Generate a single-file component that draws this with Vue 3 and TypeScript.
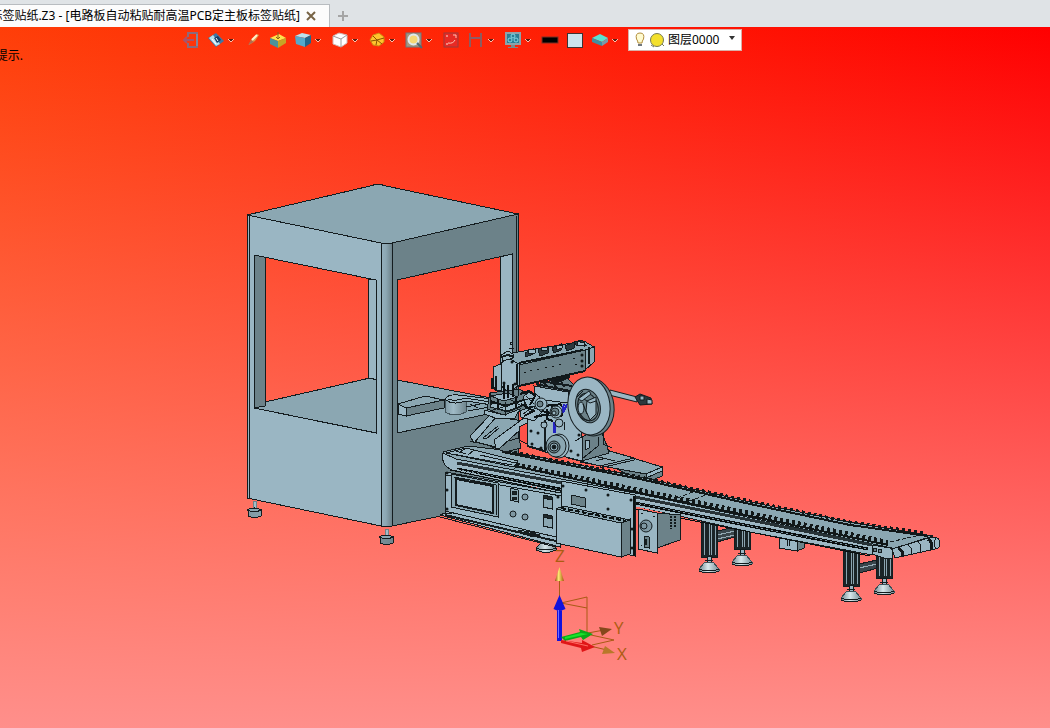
<script setup lang="ts">
import { ref } from 'vue'

interface Tool {
  id: string
  label: string
  menu?: boolean
}

interface Foot {
  x: number
  y: number
}

interface Leg {
  x: number
  top: number
  bottom: number
}

const documentTitle = '标签贴纸.Z3 - [电路板自动粘贴耐高温PCB定主板标签贴纸]'
const layers: string[] = ['图层0000']
const activeLayer = ref<string>('图层0000')

const tools: Tool[] = [
  { id: 'exit', label: '退出' },
  { id: 'plane', label: '基准面', menu: true },
  { id: 'brush', label: '格式刷' },
  { id: 'box', label: '实体' },
  { id: 'shaded', label: '着色', menu: true },
  { id: 'wire', label: '线框', menu: true },
  { id: 'section', label: '剖面', menu: true },
  { id: 'zoom', label: '缩放', menu: true },
  { id: 'fit', label: '适合窗口' },
  { id: 'measure', label: '测量', menu: true },
  { id: 'display', label: '显示', menu: true },
  { id: 'line', label: '线色' },
  { id: 'fill', label: '填充色' },
  { id: 'layer', label: '图层', menu: true },
]

const conveyorFeet: Foot[] = [
  { x: 709, y: 569 },
  { x: 742, y: 562 },
  { x: 851, y: 598 },
  { x: 884, y: 591 },
]

const legs: Leg[] = [
  { x: 734, top: 526, bottom: 549 },
  { x: 701, top: 520, bottom: 557 },
  { x: 876, top: 556, bottom: 578 },
  { x: 843, top: 548, bottom: 586 },
]

const bolts: number[][] = [
  [447, 473], [447, 490], [447, 509], [563, 486], [586, 490], [608, 495],
  [608, 509], [631, 500], [632, 529], [632, 548], [558, 497], [531, 431],
  [538, 433], [532, 444], [541, 448], [571, 451], [578, 455], [579, 435],
  [582, 355], [582, 361], [582, 366], [512, 362], [504, 383], [515, 384],
]

const armHoles: number[][] = [
  [524, 372], [530, 370], [537, 369], [545, 367], [552, 366], [559, 364], [573, 358], [575, 364],
]

const panelButtons: number[][] = [[525, 497], [513, 514], [525, 517]]
</script>

<template>
  <div class="app">
    <header class="tabs">
      <div class="tab">
        <span class="tab-title">{{ documentTitle }}</span>
        <button class="tab-close" type="button" aria-label="关闭">
          <svg viewBox="0 0 12 12" width="12" height="12"><path d="M2 2L10 10M10 2L2 10" stroke="#776345" stroke-width="2" /></svg>
        </button>
      </div>
      <button class="tab-new" type="button" aria-label="新建">
        <svg viewBox="0 0 12 12" width="12" height="12"><path d="M6 1V11M1 6H11" stroke="#a5a5a5" stroke-width="2" /></svg>
      </button>
    </header>

    <main class="stage">
      <svg class="scene" viewBox="0 27 1050 701" role="img" aria-label="贴标机三维模型">
        <defs>
          <linearGradient id="post" x1="0" x2="1" y1="0" y2="0">
            <stop offset="0" stop-color="#95b0bd" />
            <stop offset="0.45" stop-color="#8ca7b3" />
            <stop offset="1" stop-color="#6c8189" />
          </linearGradient>
          <linearGradient id="cone" x1="0" x2="1" y1="0" y2="0">
            <stop offset="0" stop-color="#6f868e" />
            <stop offset="0.45" stop-color="#d8e8ec" />
            <stop offset="1" stop-color="#758c94" />
          </linearGradient>
          <linearGradient id="drum" x1="0" x2="1" y1="0" y2="0">
            <stop offset="0" stop-color="#7f99a4" />
            <stop offset="0.4" stop-color="#a0bbc7" />
            <stop offset="1" stop-color="#71878f" />
          </linearGradient>
          <linearGradient id="gold" x1="0" x2="1" y1="0" y2="0">
            <stop offset="0" stop-color="#8a4a0c" />
            <stop offset="0.4" stop-color="#ffe873" />
            <stop offset="1" stop-color="#a3560c" />
          </linearGradient>
        </defs>

        <!-- cabinet -->
        <g class="ink">
          <path class="front" d="M500 257L512 254V400H500Z" />
          <path class="front" d="M368 279L376 280V381L368 379Z" />
          <path class="top" d="M254 408L265 402L370 378L377 380V433Z" />
          <path class="top" d="M397 380L470 394L512 402V410L397 434Z" />
          <path class="side" d="M254 255L265 257V406L254 408Z" />
          <path class="top" d="M247 215L370 186Q378 183 386 186L518 214L392 243Q386 245 381 243Z" />
          <path class="front" fill-rule="evenodd" d="M247 215L381 243V526L247 498V216ZM254 255V408L376 433V280Z" />
          <path class="side" fill-rule="evenodd" d="M392 243L518 214V500L392 526ZM397 280V433L512 409V254Z" />
          <path fill="url(#post)" d="M381 243Q386 245 392 243V526Q386 528 381 526Z" />
          <path class="line" d="M249 216V498M516 216V400" />
          <path class="top" d="M398 404L425 396L444 400L406 408Z" />
          <path class="front" d="M398 404L406 408V416L398 414Z" />
          <path class="side" d="M406 408L444 400V408L406 416Z" />
          <path fill="#a3bcc7" stroke="#6c8289" d="M253 501H256V510H253ZM385 529H388V537H385Z" />
          <path fill="url(#drum)" d="M248 510V516Q254 519 261 516V510ZM380 537V543Q386 546 393 543V537Z" />
          <path class="top" d="M247 510Q254 506 262 510Q254 513 247 510ZM379 537Q386 533 394 537Q386 540 379 537Z" />
        </g>

        <!-- arm inside the cabinet -->
        <g class="ink">
          <path fill="url(#drum)" stroke="#42545b" d="M445 399V412Q455 418 466 412V399Z" />
          <path class="front" d="M445 399Q448 394 458 395L492 399V405L466 401Q452 406 445 399Z" />
          <path class="line" d="M448 399Q456 402 465 398L490 402M466 407L485 403M468 411L490 407M470 404L478 408" />
        </g>

        <!-- support legs -->
        <g class="ink">
          <path fill="#39464c" d="M717 531L745 525V534L717 542ZM859 564L886 558V566L859 573Z" />
          <path stroke="#93aab4" d="M717 535L735 531M717 539L735 535M859 568L877 564" />
          <g v-for="leg in legs" :key="leg.x">
            <rect fill="#1b2427" :x="leg.x" :y="leg.top" width="16" :height="leg.bottom - leg.top" />
            <path stroke="#8ba4b0" :d="`M${leg.x + 3} ${leg.top}V${leg.bottom - 2}M${leg.x + 8} ${leg.top}V${leg.bottom - 2}M${leg.x + 10} ${leg.top}V${leg.bottom - 2}M${leg.x + 14} ${leg.top}V${leg.bottom - 2}`" />
          </g>
          <g v-for="foot in conveyorFeet" :key="foot.x">
            <path class="front" :d="`M${foot.x - 2} ${foot.y - 13}H${foot.x + 2}V${foot.y - 6}H${foot.x - 2}Z`" />
            <path fill="url(#cone)" stroke="#3f5056" :d="`M${foot.x - 4} ${foot.y - 7}H${foot.x + 4}L${foot.x + 10} ${foot.y}V${foot.y + 2}Q${foot.x} ${foot.y + 6} ${foot.x - 10} ${foot.y + 2}V${foot.y}Z`" />
            <path class="line" :d="`M${foot.x - 10} ${foot.y}Q${foot.x} ${foot.y + 4} ${foot.x + 10} ${foot.y}M${foot.x - 10} ${foot.y + 2}Q${foot.x} ${foot.y + 6} ${foot.x + 10} ${foot.y + 2}M${foot.x - 4} ${foot.y - 9}H${foot.x + 4}`" />
          </g>
          <path fill="url(#cone)" d="M541 543H551L556 548V550Q546 555 536 550V548Z" />
          <path class="line" d="M536 548Q546 552 556 548" />
          <path class="front" d="M779 537L797 541V551L779 548Z" />
          <path class="side" d="M797 541L804 538V548L797 551Z" />
          <path class="line" d="M787 540V546M789 540V546" />
        </g>

        <!-- base plates behind the belt -->
        <g class="ink">
          <path class="side" d="M600 461L662 471V476L646 483Z" />
          <path class="top" d="M580 462L610 451L662 467L646 474Z" />
          <path class="front" d="M646 474L662 467V471L646 478Z" />
          <path class="top" d="M568 458L606 450L634 458L600 466Z" />
          <path class="line" d="M600 466V468L634 460V458M590 455L615 461M596 461L606 458" />
        </g>

        <!-- conveyor -->
        <g class="ink">
          <path class="top" d="M443 452L468 446L502 450L640 477L750 502L850 522L933 536L892 549L770 524L640 496L455 463Z" />
          <path class="front" d="M443 453Q441 465 450 469L640 507L750 532L872 555L892 548L640 494L456 459Z" />
          <path stroke="#273236" stroke-width="3" d="M457 463L640 498L750 520L872 545" />
          <path stroke="#a3bac5" d="M457 465L640 500L750 522L872 547" />
          <path stroke="#0a0f10" stroke-width="3" d="M457 469L560 489L640 504L750 526L868 549" />
          <path stroke="#7f98a3" stroke-dasharray="2 3" d="M457 469L560 489L640 504L750 526L868 549" />
          <path stroke="#a3bac5" d="M452 469L560 492L640 507L750 529L870 552" />
          <path stroke="#0a0f10" d="M450 470L560 493L640 510L750 532L870 556" />
          <path stroke="#111718" stroke-width="2" d="M510 465L640 493L750 516L888 545" />
          <path stroke="#111718" stroke-width="4" stroke-dasharray="3 3" d="M510 463L640 490L750 513L888 542" />
          <path stroke="#111718" stroke-width="2" d="M502 452L640 479L750 504L850 525L928 536" />
          <path stroke="#111718" stroke-width="3" stroke-dasharray="3 3" d="M502 450L640 477L750 501L850 522L925 533" />
          <path class="line" stroke-dasharray="4 2" d="M672 500L693 492M684 503L706 495M890 542L920 535" />
          <path class="front" d="M446 453L466 448L518 461L514 467L490 462Z" />
          <path class="line" d="M452 454L512 465M466 448L460 452M474 450L468 455M480 455L520 464L514 469M456 451L466 454" />
          <path class="front" d="M872 545L890 548Q895 552 892 558L887 559L872 554Z" />
          <circle class="side" cx="875" cy="550" r="2" />
          <circle class="side" cx="880" cy="551" r="2" />
          <path class="front" d="M892 549L932 537Q940 537 940 543Q940 549 935 549L895 558Z" />
          <path stroke="#101719" stroke-width="3" d="M898 548Q904 551 902 556M928 539Q934 543 931 549" />
          <path class="line" d="M908 545Q914 549 911 555M918 542Q923 546 920 552M936 538Q932 544 936 549" />
        </g>

        <!-- control panel -->
        <g class="ink">
          <path class="front" d="M440 515L446 513L560 541V547Z" />
          <path class="front" d="M445 472L561 493V542L445 515Z" />
          <path class="line" d="M440 517L556 547M445 511L556 537M445 475L561 496M518 530L536 533L534 537L520 533M442 513H452" />
          <path stroke="#151d20" stroke-width="2" d="M518 532L540 535M445 515L556 541" />
          <path class="top" d="M451 474L498 483V517L451 507Z" />
          <path class="line" d="M454 477L496 485V515" />
          <path class="front" stroke-width="2" d="M456 479L493 486V513L456 505Z" />
          <path class="line" d="M478 510L494 514" />
          <path class="top" d="M510 488L518 490V502L510 500Z" />
          <path fill="#1c2528" d="M512 491H516V494H512ZM512 497H516V499H512Z" />
          <path class="top" d="M543 495L552 497V509L543 507ZM543 514L552 516V528L543 526Z" />
          <path fill="#20292c" d="M543 495L552 497V500L543 498ZM543 514L552 516V519L543 517Z" />
        </g>
        <g class="knobs">
          <circle v-for="(b, i) in panelButtons" :key="i" :cx="b[0]" :cy="b[1]" r="3" />
        </g>

        <!-- side panel and drive box -->
        <g class="ink">
          <path class="side" d="M657 513L681 515L680 540L657 548Z" />
          <path stroke="#12191b" stroke-width="2" stroke-dasharray="2 1" d="M671 516V529M675 516V528" />
          <path class="front" d="M638 509L657 513V553L638 549Z" />
          <path class="side" d="M644 536L649 537V548L644 547Z" />
          <path class="line" stroke-width="2" d="M646 539V545" />
          <path class="line" d="M641 513H643M653 516H655M641 545H642" />
          <path class="front" d="M561 481L635 495V556L561 541Z" />
          <path stroke="#0c1213" stroke-width="2" d="M634 496V556" />
          <path class="side" d="M571 495L585 498V507L571 504Z" />
          <path class="side" d="M621 523L630 519V554L621 557Z" />
          <path class="front" d="M556 509L621 523V557L556 543Z" />
          <path class="top" d="M556 509L563 506L630 520L621 523Z" />
          <path stroke="#0c1213" stroke-width="2" stroke-dasharray="5 2" d="M561 508L626 521" />
        </g>
        <g class="knobs">
          <circle cx="646" cy="526" r="6" /><circle cx="644" cy="526" r="3" />
        </g>

        <!-- chute -->
        <g class="ink">
          <path class="side" d="M490 446L519 438L521 448L505 452Z" />
          <path class="top" d="M473 441L496 417L524 421L499 448Z" />
          <path class="front" d="M470 436L490 415L496 417L474 443Z" />
          <path class="front" d="M494 440L524 418L531 420L500 448H496Z" />
          <path class="line" d="M483 438L498 426M486 439L499 428M483 438L486 439M470 441L496 447" />
          <path class="hole" d="M519 427L527 423V444L519 440Z" />
        </g>

        <!-- labelling head -->
        <g class="ink">
          <path class="side" d="M582 437L600 428L607 446L609 453L582 461Z" />
          <path class="front" d="M527 408L538 384L574 385L582 437V461L545 452L527 446Z" />
          <path class="side" d="M540 383L566 377L575 386L570 396L540 390Z" />
          <path class="front" d="M534 386L568 392V403L536 399Z" />
          <path class="line" stroke-width="2" d="M536 384L570 391M540 381L572 386M545 452V420M527 446L545 451M544 383L548 387M552 381L556 387M560 379L564 387" />
          <path fill="#11191b" d="M552 380L569 375V378L556 383Z" />
          <path class="front" d="M585 440H589V448L585 450Z" />
          <path class="line" d="M598 437V446L582 459M603 425V444L612 448M575 441L582 437" />

          <!-- gantry beam -->
          <path class="top" d="M505 360L512 353L584 341L594 347L585 353L519 366Z" />
          <path class="side" d="M519 365L585 350V371L519 386Z" />
          <path class="top" d="M585 350L594 347V362L585 370Z" />
          <path fill="#2c393e" d="M525 353L533 349V354L526 357ZM538 349L548 347V353L540 356ZM552 348L561 344V350L554 353ZM565 346L574 342V348L567 351ZM574 342L582 340L586 345H576Z" />
          <path class="front" d="M528 350L535 349V353L528 354ZM541 348L547 347V350L541 351ZM556 346L562 345V348L556 350ZM577 341L584 343V346L577 345Z" />
          <path stroke="#10181a" stroke-width="2" d="M519 363L583 350M589 347V364M519 386L585 371" />
          <path class="front" d="M493 367L501 364V390H495L493 384Z" />
          <path class="front" d="M501 363L508 358L519 364V385L509 392L501 386Z" />
          <path class="front" d="M501 355L508 351L513 354V358L503 361Z" />
          <path class="line" stroke-width="2" d="M501 357L508 355L514 357" />
          <path stroke="#10181a" stroke-width="3" d="M492 378V389" />
          <path stroke="#10181a" stroke-width="2" d="M496 376V391M517 364V385" />
          <path class="line" d="M510 342H512V344H510ZM509 348H514" />

          <!-- gripper -->
          <path class="side" d="M490 393L520 389L530 397L527 409L506 416L487 409Z" />
          <path class="front" d="M491 396L507 393L518 397L503 401ZM492 403L506 405L524 400V405L507 411L490 407ZM484 410L504 415L520 409L515 418L498 419L484 414Z" />
          <path stroke="#0d1315" stroke-width="2" d="M504 383V399M508 385V398M513 384V397M490 401L506 406L526 399M498 399V409M516 397V408" />
          <path class="line" d="M518 386V396M490 407L508 412L527 404M490 393V405M505 402V416M493 410L510 405M511 400L522 406" />
          <path class="front" d="M523 397L530 391L540 397L538 405L528 409ZM520 411L532 406L542 412L534 421L521 417Z" />
          <path stroke="#0d1315" stroke-width="2" d="M520 394L529 391L535 396L530 405M521 404L534 411L524 416M538 407L552 405L551 413L542 411M534 417L549 414" />
          <path class="line" d="M526 396L534 404M538 396L543 402L537 408M544 415L554 416M529 412L536 408M524 400L532 398M523 414L530 409" />
          <path stroke="#0d1315" stroke-width="2" d="M551 406L560 404L564 409L561 417M547 409V419L553 421" />
          <path class="line" d="M541 422H547M564 422V430" />
          <path stroke="#2424c4" stroke-width="2" d="M567 404L563 413M564 404L562 412" />
          <path stroke="#2424c4" stroke-width="3" d="M554 422V433" />
        </g>
        <g class="round">
          <circle class="front" cx="541" cy="404" r="6" /><circle class="side" cx="540" cy="404" r="3" />
          <circle class="front" cx="556" cy="412" r="6" /><circle class="side" cx="555" cy="412" r="4" /><circle class="front" cx="554" cy="413" r="2" />
          <circle class="front" cx="544" cy="425" r="3" /><circle class="front" cx="559" cy="423" r="4" />
        </g>

        <!-- tape reels -->
        <g class="round">
          <ellipse class="front" cx="559" cy="446" rx="10" ry="12" />
          <ellipse class="top" cx="556" cy="446" rx="10" ry="11" />
          <circle class="side" cx="554" cy="447" r="6" /><circle class="front" cx="554" cy="447" r="4" /><circle fill="#10181a" cx="554" cy="447" r="2" />
          <path class="front" d="M610 390L637 397V402L609 395Z" />
          <path fill="#2c383c" d="M635 397L640 394L651 398L652 404L640 405Z" />
          <path class="front" d="M640 396H644V400H640ZM647 399L652 400V404H647Z" />
          <ellipse class="side" cx="592" cy="407" rx="22" ry="29" transform="rotate(-7 592 407)" />
          <ellipse class="front" cx="589" cy="406" rx="21" ry="29" transform="rotate(-7 589 406)" />
          <ellipse class="side" cx="588" cy="406" rx="12" ry="17" transform="rotate(-15 588 406)" />
          <ellipse fill="none" cx="588" cy="407" rx="10" ry="14" transform="rotate(-15 588 407)" />
          <path class="front" d="M587 401L596 397V414L590 420L586 411ZM578 399L589 391L591 394L582 401Z" />
          <ellipse class="front" cx="581" cy="408" rx="3" ry="6" />
          <path fill="none" d="M577 397L583 391M578 413L583 419L590 421M584 399L590 403L596 401M583 404L587 414" />
        </g>

        <g fill="#111819">
          <circle v-for="(b, i) in bolts" :key="i" :cx="b[0]" :cy="b[1]" r="1.500" />
          <rect v-for="(h, i) in armHoles" :key="i" :x="h[0]" :y="h[1]" width="2" height="1" />
        </g>

        <!-- axis triad -->
        <g fill="none" stroke="#a95a14">
          <path d="M561 603L587 597V634M561 603L587 608M591 635L614 640L592 645M588 633L604 630M590 646L607 650" />
          <path d="M559.500 581V597" />
        </g>
        <path fill="url(#gold)" d="M559.500 567L564 581H555Z" />
        <path fill="#85481b" d="M612 629L602 636L599 627Z" />
        <path fill="#b8782a" d="M615 653L602 654L605 646Z" />
        <path fill="#1212dc" d="M557 609H562V641H557ZM559.500 595L565.500 609Q559 612 553.500 609Z" />
        <path fill="#6f6fff" d="M558 610H559V638H558Z" />
        <path fill="#0ba818" d="M561 637L580 632L579 629L593 634L583 640L581 637L565 641Z" />
        <path fill="#e01618" d="M561 640L582 643V640L595 647L582 652L581 648L561 643Z" />
        <path fill="#18e42a" d="M565 637L581 633L588 634L565 639Z" />
        <path stroke="#ff6b62" d="M566 641L588 646" />
        <g class="axis">
          <text x="555" y="562">Z</text>
          <text x="614" y="634">Y</text>
          <text x="617" y="660">X</text>
        </g>
      </svg>

      <div class="toolbar" role="toolbar" aria-label="视图">
        <div v-for="tool in tools" :key="tool.id" class="tool">
          <button class="tool-button" type="button" :aria-label="tool.label">
            <svg viewBox="0 0 18 18" width="18" height="18">
              <template v-if="tool.id === 'exit'">
                <path d="M6 6V2H15V16H6V12" fill="none" stroke="#8c6a7c" stroke-width="2" />
                <path d="M15 3V15" stroke="#7fa0b4" />
                <path d="M12 9H2M5 6L2 9L5 12" fill="none" stroke="#a8546c" stroke-width="2" />
              </template>
              <template v-else-if="tool.id === 'plane'">
                <path d="M1 7L9 2L17 10L9 16Z" fill="#3d78a5" />
                <path d="M2 7L6 4L13 13L9 15Z" fill="#b8e0ef" />
                <path d="M7 7L11 5L14 9L10 12Z" fill="#173d65" />
                <path d="M9 7L11 10M5 8L9 13" stroke="#fff" />
              </template>
              <template v-else-if="tool.id === 'brush'">
                <path d="M5 14L7 9L13 3L15 4L11 10Z" fill="#e09a48" />
                <path d="M8 9L13 4" stroke="#fff0cc" stroke-width="2" />
                <path d="M4 14L7 9L10 11Z" fill="#b46a50" />
              </template>
              <template v-else-if="tool.id === 'box'">
                <path d="M1 7L10 3L17 7L9 10Z" fill="#ffe44d" />
                <path d="M1 7L9 10V17L1 13Z" fill="#4a929b" />
                <path d="M9 10L17 7V12L9 17Z" fill="#c7a426" />
                <path d="M9 1V8M7 6L9 8L11 6" fill="none" stroke="#8a5a21" />
              </template>
              <template v-else-if="tool.id === 'shaded'">
                <path d="M1 5L8 2L17 4L11 7Z" fill="#b9e2ef" />
                <path d="M1 5L11 7V16L2 13Z" fill="#55a8ca" />
                <path d="M11 7L17 4V12L11 16Z" fill="#23668b" />
              </template>
              <template v-else-if="tool.id === 'wire'">
                <path d="M2 5L8 2L16 4V12L10 16L2 13Z" fill="#fff" stroke="#d0b8b4" />
                <path d="M2 5L10 8L16 4M10 8V16" fill="none" stroke="#9a9a9a" />
              </template>
              <template v-else-if="tool.id === 'section'">
                <path d="M2 9L5 4L11 2L16 6V11L11 15L5 14Z" fill="#ffc42e" stroke="#d08a10" />
                <path d="M5 5L9 9L14 13M3 10L9 9L16 7M9 9L8 14" fill="none" stroke="#8a5200" />
              </template>
              <template v-else-if="tool.id === 'zoom'">
                <rect x="1" y="2" width="15" height="14" fill="#a4977f" stroke="#6f7880" />
                <circle cx="8.500" cy="8.500" r="5" fill="#f5d774" stroke="#dfe9ee" stroke-width="2" />
                <path d="M12 12L17 17" stroke="#526a75" stroke-width="2" />
              </template>
              <template v-else-if="tool.id === 'fit'">
                <rect x="2" y="2" width="14" height="14" fill="#e82a24" stroke="#9c3a3c" />
                <path d="M11 4L14 4V7M6 12Q11 13 13 9" fill="none" stroke="#ffc2b4" />
                <path d="M4 5H6M4 13H6" stroke="#ffe4dc" />
              </template>
              <template v-else-if="tool.id === 'measure'">
                <path d="M3 2V16M14 2V16" stroke="#8d5c60" stroke-width="2" />
                <path d="M4 7H13" fill="none" stroke="#8d5c68" stroke-width="2" />
              </template>
              <template v-else-if="tool.id === 'display'">
                <rect x="1" y="1" width="16" height="13" fill="#8da2aa" />
                <rect x="3" y="3" width="12" height="9" fill="#2a7f96" />
                <circle cx="6" cy="9" r="2" fill="none" stroke="#83d8e6" />
                <circle cx="12" cy="9" r="2" fill="none" stroke="#83d8e6" />
                <circle cx="9" cy="5" r="2" fill="none" stroke="#83d8e6" />
                <path d="M7 14H11V16H14V17H4V16H7Z" fill="#7e898c" />
              </template>
              <rect v-else-if="tool.id === 'line'" x="1" y="6" width="16" height="6" fill="#000" stroke="#7d3025" />
              <rect v-else-if="tool.id === 'fill'" x="1.500" y="2.500" width="15" height="14" fill="#cce3ed" stroke="#3d3333" />
              <template v-else>
                <path d="M1 7L9 3L17 7L11 11Z" fill="#5ce0d0" />
                <path d="M1 7L11 11V15L1 11Z" fill="#3f8fa0" />
                <path d="M11 11L17 7V11L11 15Z" fill="#7a9aa8" />
              </template>
            </svg>
          </button>
          <button v-if="tool.menu" class="tool-menu" type="button" :aria-label="tool.label + '选项'">
            <svg viewBox="0 0 6 5" width="6" height="5"><path d="M0 1L3 4L6 1" fill="#5c1c14" stroke="#ffc0aa" /></svg>
          </button>
        </div>

        <label class="layer">
          <svg viewBox="0 0 12 16" width="12" height="16">
            <path d="M4 11Q4 9 2.500 7Q1 1 6 1Q11 1 9.500 7Q8 9 8 11Z" fill="#fffbd0" stroke="#b38e3c" />
            <path d="M4 12H8V14H4Z" fill="#70777d" />
          </svg>
          <svg viewBox="0 0 16 16" width="16" height="16">
            <circle cx="8" cy="8" r="6.500" fill="#f3e02c" stroke="#777b54" />
            <path d="M2 13L5 15M13 12L15 14" stroke="#777b54" />
          </svg>
          <select v-model="activeLayer" aria-label="当前图层">
            <option v-for="name in layers" :key="name" :value="name">{{ name }}</option>
          </select>
          <svg class="layer-caret" viewBox="0 0 6 4" width="6" height="4"><path d="M0 0H6L3 4Z" fill="#333" /></svg>
        </label>
      </div>

      <p class="hint">提示.</p>
    </main>
  </div>
</template>

<style>
body {
  margin: 0;
}
</style>

<style scoped>
.app {
  display: flex;
  flex-direction: column;
  min-height: 100vh;
  font-family: "Noto Sans", "Noto Sans CJK SC", sans-serif;
  font-size: 12px;
  color: #000;
}

button {
  display: flex;
  align-items: center;
  justify-content: center;
  padding: 0;
  border: 0;
  background: none;
}

.tabs {
  display: flex;
  align-items: flex-end;
  height: 27px;
  background: #dfe3e6;
}

.tab {
  box-sizing: border-box;
  display: flex;
  align-items: center;
  justify-content: flex-end;
  gap: 5px;
  width: 330px;
  height: 23px;
  padding-right: 12px;
  overflow: hidden;
  border: solid #b8bcc0;
  border-width: 1px 1px 0 0;
  background: #fcfcfc;
}

.tab-title {
  flex: none;
  line-height: 22px;
  white-space: nowrap;
}

.tab-close {
  width: 12px;
  height: 22px;
}

.tab-new {
  width: 26px;
  height: 23px;
}

.stage {
  position: relative;
  flex: 1;
  overflow: hidden;
  background:
    linear-gradient(to bottom, rgba(255, 143, 139, 0), rgb(255, 143, 139)),
    linear-gradient(to right, #ff3e08, #ff0000);
}

.scene {
  display: block;
  width: 100%;
  height: auto;
}

.ink {
  fill: none;
  stroke: #141c1f;
  stroke-width: 1px;
  shape-rendering: crispEdges;
}

.round {
  stroke: #141c1f;
  stroke-width: 1px;
}

.knobs {
  fill: #7f98a3;
  stroke: #141c1f;
  stroke-width: 1px;
}

.front {
  fill: #9ab6c3;
}

.top {
  fill: #8ba7b2;
}

.side {
  fill: #6c8289;
}

.line {
  fill: none;
}

.hole {
  fill: #ff5048;
}

.axis {
  fill: #ac5c12;
  font-family: "Open Sans", "Noto Sans", sans-serif;
  font-size: 17px;
}

.toolbar {
  position: absolute;
  top: 2px;
  left: 0;
  display: flex;
  align-items: center;
  gap: 7px;
  padding-left: 182px;
}

.tool {
  display: flex;
  align-items: center;
}

.tool-button {
  width: 18px;
  height: 22px;
}

.tool-menu {
  width: 12px;
  height: 22px;
}

.layer {
  box-sizing: border-box;
  display: flex;
  align-items: center;
  gap: 3px;
  width: 114px;
  height: 22px;
  padding: 0 6px 0 5px;
  border: 1px solid #d9b0a8;
  background: #fff;
}

.layer select {
  flex: 1;
  min-width: 0;
  padding: 0;
  border: 0;
  appearance: none;
  background: none;
  color: #000;
  font: inherit;
  line-height: 18px;
}

.layer svg {
  flex: none;
}

.layer-caret {
  margin-bottom: 4px;
}

.hint {
  position: absolute;
  top: 20px;
  left: 0;
  display: flex;
  justify-content: flex-end;
  width: 23px;
  margin: 0;
  overflow: hidden;
  line-height: 18px;
  white-space: nowrap;
}
</style>
